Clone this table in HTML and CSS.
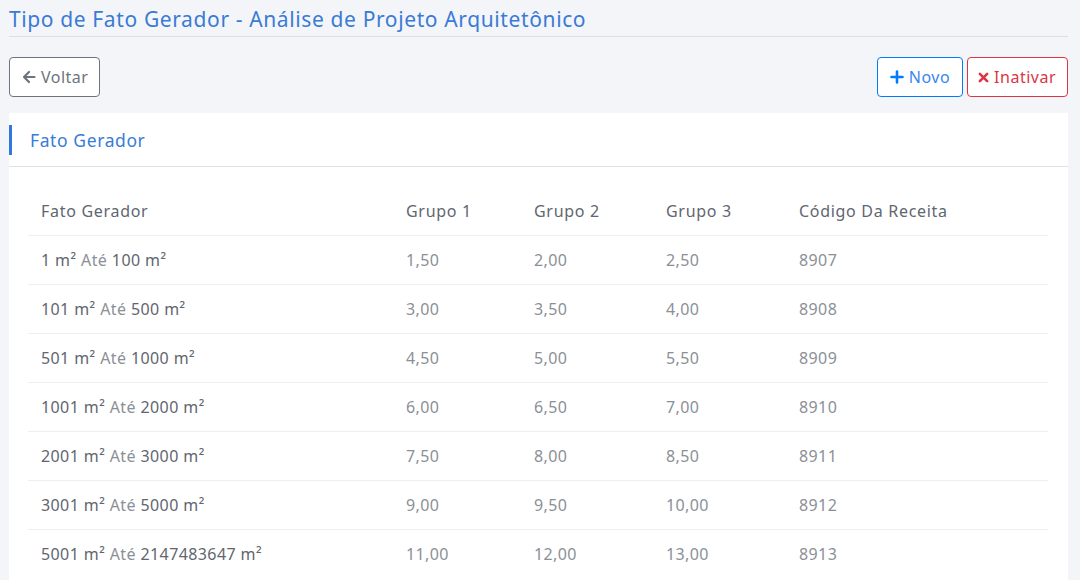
FILE: index.html
```html
<!DOCTYPE html>
<html lang="pt">
<head>
<meta charset="utf-8">
<link rel="stylesheet" href="styles.css">
</head>
<body>
<div class="page">
  <h1 class="title">Tipo de Fato Gerador - Análise de Projeto Arquitetônico</h1>
  <div class="toolbar">
    <button class="btn btn-back">
      <svg width="14" height="14" viewBox="0 0 14 14"><path d="M7 2 L2 7 L7 12 M2 7 H12.5" fill="none" stroke="#6c757d" stroke-width="2.2" stroke-linecap="round" stroke-linejoin="round"/></svg>
      Voltar
    </button>
    <div class="right-actions">
      <button class="btn btn-new">
        <svg width="14" height="14" viewBox="0 0 14 14"><path d="M7 1.5 V12.5 M1.5 7 H12.5" fill="none" stroke="#007bff" stroke-width="2.6" stroke-linecap="round"/></svg>
        Novo
      </button>
      <button class="btn btn-inactive">
        <svg width="11" height="11" viewBox="0 0 12 12"><path d="M2 2 L10 10 M10 2 L2 10" fill="none" stroke="#dc3545" stroke-width="2.8" stroke-linecap="round"/></svg>
        Inativar
      </button>
    </div>
  </div>
  <section class="card">
    <div class="card-header"><span class="card-title">Fato Gerador</span></div>
    <div class="card-body">
      <table class="grid">
        <colgroup>
          <col class="c1"><col class="c2"><col class="c3"><col class="c4"><col class="c5">
        </colgroup>
        <thead>
          <tr><th>Fato Gerador</th><th>Grupo 1</th><th>Grupo 2</th><th>Grupo 3</th><th>Código Da Receita</th></tr>
        </thead>
        <tbody>
          <tr><td><span class="v">1 m²</span> <span class="a">Até</span> <span class="v">100 m²</span></td><td>1,50</td><td>2,00</td><td>2,50</td><td>8907</td></tr>
          <tr><td><span class="v">101 m²</span> <span class="a">Até</span> <span class="v">500 m²</span></td><td>3,00</td><td>3,50</td><td>4,00</td><td>8908</td></tr>
          <tr><td><span class="v">501 m²</span> <span class="a">Até</span> <span class="v">1000 m²</span></td><td>4,50</td><td>5,00</td><td>5,50</td><td>8909</td></tr>
          <tr><td><span class="v">1001 m²</span> <span class="a">Até</span> <span class="v">2000 m²</span></td><td>6,00</td><td>6,50</td><td>7,00</td><td>8910</td></tr>
          <tr><td><span class="v">2001 m²</span> <span class="a">Até</span> <span class="v">3000 m²</span></td><td>7,50</td><td>8,00</td><td>8,50</td><td>8911</td></tr>
          <tr><td><span class="v">3001 m²</span> <span class="a">Até</span> <span class="v">5000 m²</span></td><td>9,00</td><td>9,50</td><td>10,00</td><td>8912</td></tr>
          <tr><td><span class="v">5001 m²</span> <span class="a">Até</span> <span class="v">2147483647 m²</span></td><td>11,00</td><td>12,00</td><td>13,00</td><td>8913</td></tr>
        </tbody>
      </table>
    </div>
  </section>
</div>
</body>
</html>
```

FILE: styles.css
```css
* { box-sizing: border-box; }
html, body { margin: 0; padding: 0; }
body {
  background: #f4f5f9;
  font-family: "Noto Sans", "DejaVu Sans", sans-serif;
  color: #6c757d;
  overflow: hidden;
}
.page {
  padding: 0 12px 0 9px;
}
.title {
  margin: 0;
  padding-top: 5px;
  padding-bottom: 3px;
  font-size: 21px;
  font-weight: 400;
  letter-spacing: 0.62px;
  line-height: 28px;
  color: #3a7bd5;
  border-bottom: 1px solid #dcdfe4;
}
.toolbar {
  display: flex;
  justify-content: space-between;
  margin-top: 20px;
}
.right-actions {
  display: flex;
  gap: 4px;
}
.btn {
  display: flex;
  align-items: center;
  gap: 5px;
  height: 40px;
  padding: 0 12px;
  background: #fff;
  border: 1px solid;
  border-radius: 4px;
  font-family: inherit;
  font-size: 16px;
  letter-spacing: 0.5px;
}
.btn-back { border-color: #6c757d; color: #6c757d; padding: 0 11px 0 12px; }
.btn-new { border-color: #007bff; color: #3a86f0; padding: 0 12px 0 12px; }
.btn-inactive { border-color: #dc3545; color: #dc3545; padding: 0 11px 0 10px; }
.card {
  margin-top: 16px;
  background: #fff;
}
.card-header {
  height: 54px;
  display: flex;
  align-items: center;
  border-bottom: 1px solid #dee2e6;
}
.card-title {
  display: block;
  border-left: 3px solid #2f7ad8;
  padding-left: 18px;
  height: 30px;
  line-height: 30px;
  font-size: 17.5px;
  letter-spacing: 0.6px;
  color: #3a7bd5;
}
.card-body {
  padding: 19px 20px 20px 19px;
}
.grid {
  width: 100%;
  border-collapse: collapse;
  font-size: 16px;
  letter-spacing: 0.7px;
}
.c1 { width: 365px; }
.c2 { width: 128px; }
.c3 { width: 132px; }
.c4 { width: 133px; }
.grid th, .grid td {
  text-align: left;
  padding: 0 12px 0 13px;
  height: 49px;
  vertical-align: middle;
  font-weight: 400;
}
.grid th { color: #5f6670; padding-top: 2px; }
.grid td { border-top: 1px solid #eceef1; color: #8b9097; letter-spacing: 0.4px; }
.grid .v { color: #5f6670; }
.grid .a { color: #8b9097; }
```
